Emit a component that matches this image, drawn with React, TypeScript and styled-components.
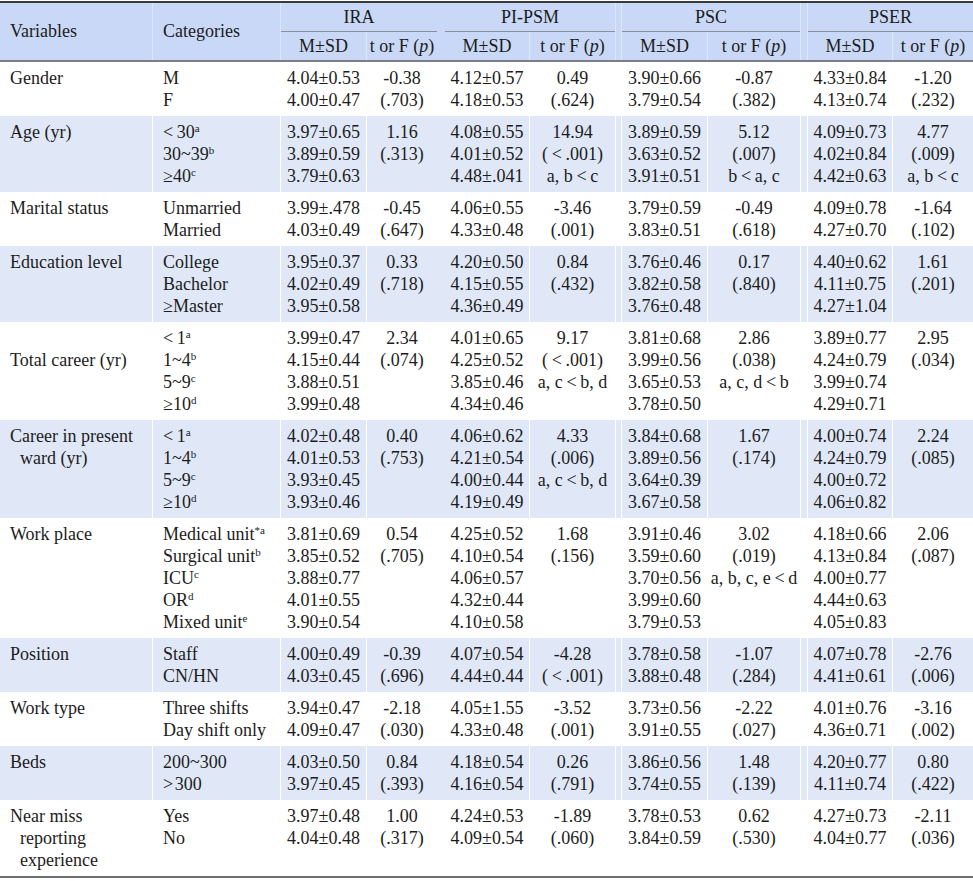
import React from 'react';
import styled, { createGlobalStyle } from 'styled-components';

const Global = createGlobalStyle`
  html, body { margin: 0; padding: 0; background: #ffffff; }
  body {
    font-family: "Liberation Serif", "Times New Roman", serif;
    color: #1c1c1c;
  }
`;

const COLS = '153px 128px 86px 70px 8px 85px 85px 7px 86px 92px 8px 85px 80px';
const HEAD_RULE = '#dfe7fb';
const BODY_RULE = '#ffffff';

type Rule = 'none' | 'right' | 'both';

const Table = styled.div`
  width: 973px;
  margin-top: 1px;
  border-top: 2px solid #3a3a3a;
  border-bottom: 2px solid #6f6f6f;
  font-size: 18px;
`;

const Head = styled.div`
  display: grid;
  grid-template-columns: ${COLS};
  grid-template-rows: 29px 28px;
  background: #c9d8f6;
  border-bottom: 2px solid #7b7e86;
`;

const HeadCell = styled.div<{
  $col: string;
  $row: string;
  $left?: boolean;
  $rule?: Rule;
  $under?: boolean;
}>`
  grid-column: ${(p) => p.$col};
  grid-row: ${(p) => p.$row};
  display: flex;
  align-items: center;
  justify-content: ${(p) => (p.$left ? 'flex-start' : 'center')};
  padding-left: ${(p) => (p.$left ? '10px' : '0')};
  white-space: nowrap;
  box-sizing: border-box;
  border-right: ${(p) => (p.$rule === 'right' || p.$rule === 'both' ? `1px solid ${HEAD_RULE}` : 'none')};
  border-left: ${(p) => (p.$rule === 'both' ? `1px solid ${HEAD_RULE}` : 'none')};
  border-bottom: ${(p) => (p.$under ? '1px solid #8b8f98' : 'none')};
`;

const Ital = styled.i`
  font-style: italic;
`;

const Row = styled.div<{ $shade: boolean }>`
  display: grid;
  grid-template-columns: ${COLS};
  background: ${(p) => (p.$shade ? '#e0e8f8' : '#ffffff')};
`;

const Cell = styled.div<{ $rule?: Rule; $left?: boolean; $offset?: number }>`
  display: flex;
  flex-direction: column;
  align-items: ${(p) => (p.$left ? 'flex-start' : 'center')};
  padding: ${(p) => 5 + (p.$offset ?? 0) * 22}px 0 5px ${(p) => (p.$left ? '10px' : '0')};
  box-sizing: border-box;
  min-width: 0;
  border-right: ${(p) => (p.$rule === 'right' || p.$rule === 'both' ? `1px solid ${BODY_RULE}` : 'none')};
  border-left: ${(p) => (p.$rule === 'both' ? `1px solid ${BODY_RULE}` : 'none')};
`;

const Line = styled.div<{ $cont?: boolean }>`
  height: 22px;
  line-height: 22px;
  white-space: nowrap;
  padding-left: ${(p) => (p.$cont ? '10px' : '0')};
`;

const Sup = styled.sup`
  font-size: 11px;
  line-height: 0;
  vertical-align: 6px;
`;

type Ln = string | [string, string];

interface Stat {
  m: string[];
  t: string[];
}

interface RowData {
  label: string[];
  offset?: number;
  cats: Ln[];
  vals: Stat[];
}

const LT = '<\u2009';
const lt = '\u2009<\u2009';

const rows: RowData[] = [
  {
    label: ['Gender'],
    cats: ['M', 'F'],
    vals: [
      { m: ['4.04±0.53', '4.00±0.47'], t: ['-0.38', '(.703)'] },
      { m: ['4.12±0.57', '4.18±0.53'], t: ['0.49', '(.624)'] },
      { m: ['3.90±0.66', '3.79±0.54'], t: ['-0.87', '(.382)'] },
      { m: ['4.33±0.84', '4.13±0.74'], t: ['-1.20', '(.232)'] },
    ],
  },
  {
    label: ['Age (yr)'],
    cats: [[LT + '30', 'a'], ['30~39', 'b'], ['≥40', 'c']],
    vals: [
      { m: ['3.97±0.65', '3.89±0.59', '3.79±0.63'], t: ['1.16', '(.313)'] },
      { m: ['4.08±0.55', '4.01±0.52', '4.48±.041'], t: ['14.94', `(${lt}.001)`, `a, b${lt}c`] },
      { m: ['3.89±0.59', '3.63±0.52', '3.91±0.51'], t: ['5.12', '(.007)', `b${lt}a, c`] },
      { m: ['4.09±0.73', '4.02±0.84', '4.42±0.63'], t: ['4.77', '(.009)', `a, b${lt}c`] },
    ],
  },
  {
    label: ['Marital status'],
    cats: ['Unmarried', 'Married'],
    vals: [
      { m: ['3.99±.478', '4.03±0.49'], t: ['-0.45', '(.647)'] },
      { m: ['4.06±0.55', '4.33±0.48'], t: ['-3.46', '(.001)'] },
      { m: ['3.79±0.59', '3.83±0.51'], t: ['-0.49', '(.618)'] },
      { m: ['4.09±0.78', '4.27±0.70'], t: ['-1.64', '(.102)'] },
    ],
  },
  {
    label: ['Education level'],
    cats: ['College', 'Bachelor', '≥Master'],
    vals: [
      { m: ['3.95±0.37', '4.02±0.49', '3.95±0.58'], t: ['0.33', '(.718)'] },
      { m: ['4.20±0.50', '4.15±0.55', '4.36±0.49'], t: ['0.84', '(.432)'] },
      { m: ['3.76±0.46', '3.82±0.58', '3.76±0.48'], t: ['0.17', '(.840)'] },
      { m: ['4.40±0.62', '4.11±0.75', '4.27±1.04'], t: ['1.61', '(.201)'] },
    ],
  },
  {
    label: ['Total career (yr)'],
    offset: 1,
    cats: [[LT + '1', 'a'], ['1~4', 'b'], ['5~9', 'c'], ['≥10', 'd']],
    vals: [
      { m: ['3.99±0.47', '4.15±0.44', '3.88±0.51', '3.99±0.48'], t: ['2.34', '(.074)'] },
      { m: ['4.01±0.65', '4.25±0.52', '3.85±0.46', '4.34±0.46'], t: ['9.17', `(${lt}.001)`, `a, c${lt}b, d`] },
      { m: ['3.81±0.68', '3.99±0.56', '3.65±0.53', '3.78±0.50'], t: ['2.86', '(.038)', `a, c, d${lt}b`] },
      { m: ['3.89±0.77', '4.24±0.79', '3.99±0.74', '4.29±0.71'], t: ['2.95', '(.034)'] },
    ],
  },
  {
    label: ['Career in present', 'ward (yr)'],
    cats: [[LT + '1', 'a'], ['1~4', 'b'], ['5~9', 'c'], ['≥10', 'd']],
    vals: [
      { m: ['4.02±0.48', '4.01±0.53', '3.93±0.45', '3.93±0.46'], t: ['0.40', '(.753)'] },
      { m: ['4.06±0.62', '4.21±0.54', '4.00±0.44', '4.19±0.49'], t: ['4.33', '(.006)', `a, c${lt}b, d`] },
      { m: ['3.84±0.68', '3.89±0.56', '3.64±0.39', '3.67±0.58'], t: ['1.67', '(.174)'] },
      { m: ['4.00±0.74', '4.24±0.79', '4.00±0.72', '4.06±0.82'], t: ['2.24', '(.085)'] },
    ],
  },
  {
    label: ['Work place'],
    cats: [['Medical unit', '*a'], ['Surgical unit', 'b'], ['ICU', 'c'], ['OR', 'd'], ['Mixed unit', 'e']],
    vals: [
      { m: ['3.81±0.69', '3.85±0.52', '3.88±0.77', '4.01±0.55', '3.90±0.54'], t: ['0.54', '(.705)'] },
      { m: ['4.25±0.52', '4.10±0.54', '4.06±0.57', '4.32±0.44', '4.10±0.58'], t: ['1.68', '(.156)'] },
      { m: ['3.91±0.46', '3.59±0.60', '3.70±0.56', '3.99±0.60', '3.79±0.53'], t: ['3.02', '(.019)', `a, b, c, e${lt}d`] },
      { m: ['4.18±0.66', '4.13±0.84', '4.00±0.77', '4.44±0.63', '4.05±0.83'], t: ['2.06', '(.087)'] },
    ],
  },
  {
    label: ['Position'],
    cats: ['Staff', 'CN/HN'],
    vals: [
      { m: ['4.00±0.49', '4.03±0.45'], t: ['-0.39', '(.696)'] },
      { m: ['4.07±0.54', '4.44±0.44'], t: ['-4.28', `(${lt}.001)`] },
      { m: ['3.78±0.58', '3.88±0.48'], t: ['-1.07', '(.284)'] },
      { m: ['4.07±0.78', '4.41±0.61'], t: ['-2.76', '(.006)'] },
    ],
  },
  {
    label: ['Work type'],
    cats: ['Three shifts', 'Day shift only'],
    vals: [
      { m: ['3.94±0.47', '4.09±0.47'], t: ['-2.18', '(.030)'] },
      { m: ['4.05±1.55', '4.33±0.48'], t: ['-3.52', '(.001)'] },
      { m: ['3.73±0.56', '3.91±0.55'], t: ['-2.22', '(.027)'] },
      { m: ['4.01±0.76', '4.36±0.71'], t: ['-3.16', '(.002)'] },
    ],
  },
  {
    label: ['Beds'],
    cats: ['200~300', '>\u200A300'],
    vals: [
      { m: ['4.03±0.50', '3.97±0.45'], t: ['0.84', '(.393)'] },
      { m: ['4.18±0.54', '4.16±0.54'], t: ['0.26', '(.791)'] },
      { m: ['3.86±0.56', '3.74±0.55'], t: ['1.48', '(.139)'] },
      { m: ['4.20±0.77', '4.11±0.74'], t: ['0.80', '(.422)'] },
    ],
  },
  {
    label: ['Near miss', 'reporting', 'experience'],
    cats: ['Yes', 'No'],
    vals: [
      { m: ['3.97±0.48', '4.04±0.48'], t: ['1.00', '(.317)'] },
      { m: ['4.24±0.53', '4.09±0.54'], t: ['-1.89', '(.060)'] },
      { m: ['3.78±0.53', '3.84±0.59'], t: ['0.62', '(.530)'] },
      { m: ['4.27±0.73', '4.04±0.77'], t: ['-2.11', '(.036)'] },
    ],
  },
];

const groups = ['IRA', 'PI-PSM', 'PSC', 'PSER'];
// grid start column for each group, and the spacer rule after it
const groupStart = [3, 6, 9, 12];
const spacerRule: Rule[] = ['none', 'both', 'both'];

const renderLn = (l: Ln, k: number) =>
  typeof l === 'string' ? (
    <Line key={k}>{l}</Line>
  ) : (
    <Line key={k}>
      {l[0]}
      <Sup>{l[1]}</Sup>
    </Line>
  );

const TStat = () => (
  <>
    t or F (<Ital>p</Ital>)
  </>
);

export default function App() {
  return (
    <>
      <Global />
      <Table>
        <Head>
          <HeadCell $col="1" $row="1 / 3" $left $rule="right">
            Variables
          </HeadCell>
          <HeadCell $col="2" $row="1 / 3" $left $rule="right">
            Categories
          </HeadCell>
          {groups.map((g, i) => (
            <React.Fragment key={g}>
              <HeadCell $col={`${groupStart[i]} / span 2`} $row="1" $under>
                {g}
              </HeadCell>
              <HeadCell $col={`${groupStart[i]}`} $row="2" $rule="right">
                M±SD
              </HeadCell>
              <HeadCell $col={`${groupStart[i] + 1}`} $row="2">
                <TStat />
              </HeadCell>
              {i < 3 && (
                <HeadCell $col={`${groupStart[i] + 2}`} $row="1 / 3" $rule={spacerRule[i]} />
              )}
            </React.Fragment>
          ))}
        </Head>
        {rows.map((r, i) => (
          <Row key={i} $shade={i % 2 === 1}>
            <Cell $left $rule="right" $offset={r.offset}>
              {r.label.map((l, j) => (
                <Line key={j} $cont={j > 0}>
                  {l}
                </Line>
              ))}
            </Cell>
            <Cell $left $rule="right">
              {r.cats.map(renderLn)}
            </Cell>
            {r.vals.map((v, gi) => (
              <React.Fragment key={gi}>
                <Cell $rule="right">{v.m.map(renderLn)}</Cell>
                <Cell>{v.t.map(renderLn)}</Cell>
                {gi < 3 && <Cell $rule={spacerRule[gi]} />}
              </React.Fragment>
            ))}
          </Row>
        ))}
      </Table>
    </>
  );
}
